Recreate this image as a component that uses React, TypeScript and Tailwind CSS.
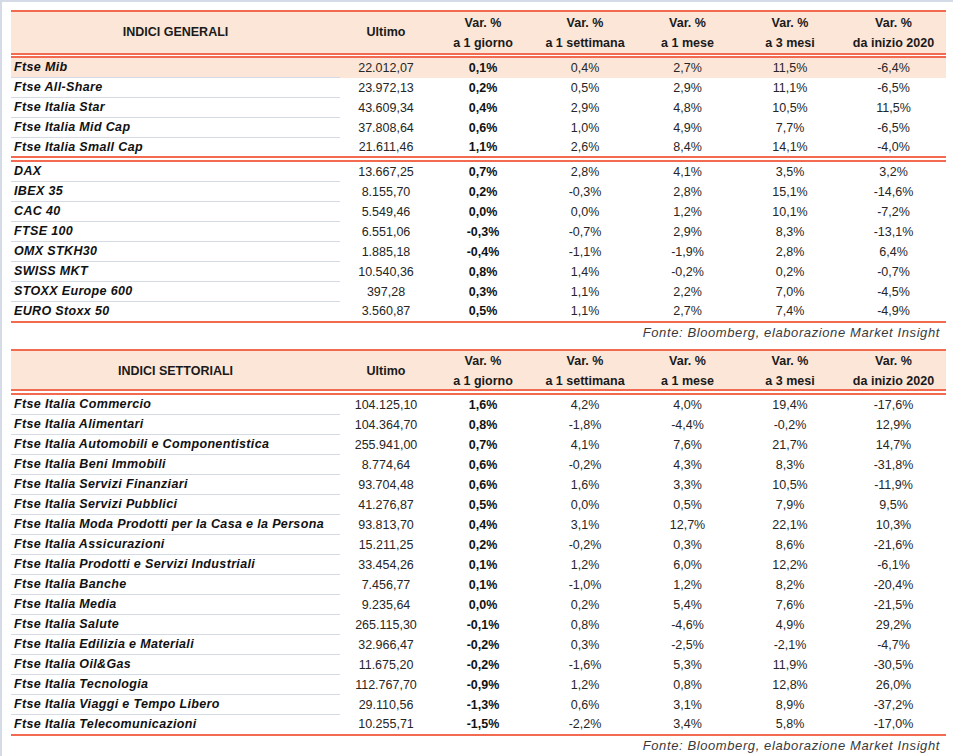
type Row = [string, string, string, string, string, string, string]

const generali: Row[] = [
  ['Ftse Mib', '22.012,07', '0,1%', '0,4%', '2,7%', '11,5%', '-6,4%'],
  ['Ftse All-Share', '23.972,13', '0,2%', '0,5%', '2,9%', '11,1%', '-6,5%'],
  ['Ftse Italia Star', '43.609,34', '0,4%', '2,9%', '4,8%', '10,5%', '11,5%'],
  ['Ftse Italia Mid Cap', '37.808,64', '0,6%', '1,0%', '4,9%', '7,7%', '-6,5%'],
  ['Ftse Italia Small Cap', '21.611,46', '1,1%', '2,6%', '8,4%', '14,1%', '-4,0%'],
]

const esteri: Row[] = [
  ['DAX', '13.667,25', '0,7%', '2,8%', '4,1%', '3,5%', '3,2%'],
  ['IBEX 35', '8.155,70', '0,2%', '-0,3%', '2,8%', '15,1%', '-14,6%'],
  ['CAC 40', '5.549,46', '0,0%', '0,0%', '1,2%', '10,1%', '-7,2%'],
  ['FTSE 100', '6.551,06', '-0,3%', '-0,7%', '2,9%', '8,3%', '-13,1%'],
  ['OMX STKH30', '1.885,18', '-0,4%', '-1,1%', '-1,9%', '2,8%', '6,4%'],
  ['SWISS MKT', '10.540,36', '0,8%', '1,4%', '-0,2%', '0,2%', '-0,7%'],
  ['STOXX Europe 600', '397,28', '0,3%', '1,1%', '2,2%', '7,0%', '-4,5%'],
  ['EURO Stoxx 50', '3.560,87', '0,5%', '1,1%', '2,7%', '7,4%', '-4,9%'],
]

const settoriali: Row[] = [
  ['Ftse Italia Commercio', '104.125,10', '1,6%', '4,2%', '4,0%', '19,4%', '-17,6%'],
  ['Ftse Italia Alimentari', '104.364,70', '0,8%', '-1,8%', '-4,4%', '-0,2%', '12,9%'],
  ['Ftse Italia Automobili e Componentistica', '255.941,00', '0,7%', '4,1%', '7,6%', '21,7%', '14,7%'],
  ['Ftse Italia Beni Immobili', '8.774,64', '0,6%', '-0,2%', '4,3%', '8,3%', '-31,8%'],
  ['Ftse Italia Servizi Finanziari', '93.704,48', '0,6%', '1,6%', '3,3%', '10,5%', '-11,9%'],
  ['Ftse Italia Servizi Pubblici', '41.276,87', '0,5%', '0,0%', '0,5%', '7,9%', '9,5%'],
  ['Ftse Italia Moda Prodotti per la Casa e la Persona', '93.813,70', '0,4%', '3,1%', '12,7%', '22,1%', '10,3%'],
  ['Ftse Italia Assicurazioni', '15.211,25', '0,2%', '-0,2%', '0,3%', '8,6%', '-21,6%'],
  ['Ftse Italia Prodotti e Servizi Industriali', '33.454,26', '0,1%', '1,2%', '6,0%', '12,2%', '-6,1%'],
  ['Ftse Italia Banche', '7.456,77', '0,1%', '-1,0%', '1,2%', '8,2%', '-20,4%'],
  ['Ftse Italia Media', '9.235,64', '0,0%', '0,2%', '5,4%', '7,6%', '-21,5%'],
  ['Ftse Italia Salute', '265.115,30', '-0,1%', '0,8%', '-4,6%', '4,9%', '29,2%'],
  ['Ftse Italia Edilizia e Materiali', '32.966,47', '-0,2%', '0,3%', '-2,5%', '-2,1%', '-4,7%'],
  ['Ftse Italia Oil&Gas', '11.675,20', '-0,2%', '-1,6%', '5,3%', '11,9%', '-30,5%'],
  ['Ftse Italia Tecnologia', '112.767,70', '-0,9%', '1,2%', '0,8%', '12,8%', '26,0%'],
  ['Ftse Italia Viaggi e Tempo Libero', '29.110,56', '-1,3%', '0,6%', '3,1%', '8,9%', '-37,2%'],
  ['Ftse Italia Telecomunicazioni', '10.255,71', '-1,5%', '-2,2%', '3,4%', '5,8%', '-17,0%'],
]

const cols = 'grid grid-cols-[329px_92px_102px_102px_103px_102px_105px]'

const heads = [
  ['Var. %', 'a 1 giorno'],
  ['Var. %', 'a 1 settimana'],
  ['Var. %', 'a 1 mese'],
  ['Var. %', 'a 3 mesi'],
  ['Var. %', 'da inizio 2020'],
]

function Header({ title, tall }: { title: string; tall: boolean }) {
  return (
    <div className={`${cols} border-t-2 border-[#f26a4f] bg-[#fbe6d8] font-bold text-[#1a1a1a] ${tall ? 'h-[43px]' : 'h-[40px]'}`}>
      <div className="flex items-center justify-center">{title}</div>
      <div className="flex items-center justify-center">Ultimo</div>
      {heads.map(([a, b]) => (
        <div key={b} className="flex flex-col items-center justify-center leading-5">
          <span>{a}</span>
          <span>{b}</span>
        </div>
      ))}
    </div>
  )
}

function DataRow({ row, height, border, highlight }: { row: Row; height: string; border: boolean; highlight?: boolean }) {
  const [name, ultimo, g, s, m, t, y] = row
  return (
    <div className={`${cols} ${height} ${highlight ? 'bg-[#fbe6d8]' : ''}`}>
      <div
        className={`flex items-center pl-[3px] font-bold italic tracking-[0.35px] text-[#111] ${
          border ? 'border-b border-[#d5dbe5]' : ''
        }`}
      >
        {name}
      </div>
      <div className="flex items-center justify-center">{ultimo}</div>
      <div className="flex items-center justify-center font-bold text-[#111]">{g}</div>
      <div className="flex items-center justify-center">{s}</div>
      <div className="flex items-center justify-center">{m}</div>
      <div className="flex items-center justify-center">{t}</div>
      <div className="flex items-center justify-center">{y}</div>
    </div>
  )
}

function Fonte() {
  return (
    <div className="h-[19px] flex items-center justify-end pr-[6px] italic text-[13px] tracking-[0.6px] text-[#3a3a3a]">
      Fonte: Bloomberg, elaborazione Market Insight
    </div>
  )
}

export default function App() {
  return (
    <div
      className="w-[953px] h-[756px] bg-white border-t-2 border-l-2 border-[#d5dbe6] pl-[9px] pt-[8px] text-[12.5px] text-[#262626] overflow-hidden"
      style={{ fontFamily: '"Liberation Sans", Arial, sans-serif' }}
    >
      <div className="w-[935px]">
        <Header title="INDICI GENERALI" tall />
        <div className="h-[5px] border-y-2 border-[#f26a4f]" />
        {generali.map((r, i) => {
          const last = i === generali.length - 1
          return <DataRow key={r[0]} row={r} height={last ? 'h-[18px]' : 'h-5'} border={!last} highlight={i === 0} />
        })}
        <div className="h-[6px] border-y-2 border-[#f26a4f]" />
        {esteri.map((r, i) => {
          const last = i === esteri.length - 1
          return <DataRow key={r[0]} row={r} height={last ? 'h-[19px]' : 'h-5'} border={!last} />
        })}
        <div className="h-[2px] bg-[#f26a4f]" />
        <Fonte />
        <div className="h-[7px]" />

        <Header title="INDICI SETTORIALI" tall={false} />
        <div className="h-[6px] border-y-2 border-[#f26a4f]" />
        {settoriali.map((r, i) => {
          const last = i === settoriali.length - 1
          return <DataRow key={r[0]} row={r} height={last ? 'h-[19px]' : 'h-5'} border={!last} />
        })}
        <div className="h-[2px] bg-[#f26a4f]" />
        <Fonte />
      </div>
    </div>
  )
}
